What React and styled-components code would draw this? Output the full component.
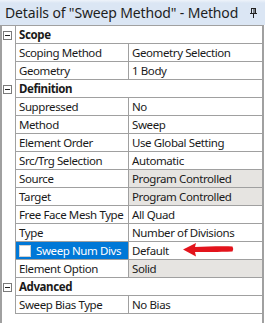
import React from "react";
import styled, {createGlobalStyle} from "styled-components";

const Global = createGlobalStyle`
    html, body {
        margin: 0;
        padding: 0;
        background: #f0f0f0;
    }
    body {
        font-family: "Noto Sans", "Open Sans", sans-serif;
        color: #1a1a1a;
    }
`;

const Panel = styled.div`
    position: relative;
    width: 265px;
    height: 323px;
    display: flex;
    flex-direction: column;
    background: #ffffff;
    overflow: hidden;
`;

const TitleBar = styled.div`
    height: 25px;
    display: flex;
    align-items: center;
    justify-content: space-between;
    padding: 0 8px 0 5px;
    background: linear-gradient(#eef3fa 0px, #dbe6f4 3px, #dbe6f4 100%);
    font-size: 14px;
    letter-spacing: -0.15px;
    color: #1e1e1e;
    white-space: nowrap;
`;

const Grid = styled.div`
    flex: 1;
    border-top: 1px solid #a0a0a0;
    border-left: 2px solid #a0a0a0;
    border-right: 2px solid #a0a0a0;
    margin-right: 1px;
    background: #ffffff;
`;

const Row = styled.div`
    display: grid;
    grid-template-columns: 13px 113px 1fr;
    height: 18px;
    font-size: 11.5px;
    letter-spacing: -0.4px;
`;

const Gutter = styled.div`
    display: flex;
    align-items: center;
    padding-left: 1px;
`;

const Cell = styled.div`
    display: flex;
    align-items: center;
    gap: 5px;
    border-left: 1px solid #a0a0a0;
    border-bottom: 1px solid #a0a0a0;
    padding-left: 3px;
    white-space: nowrap;
    overflow: hidden;
    background: ${p => (p.$selected ? "#0078d7" : p.$gray ? "#e6e4e1" : "#ffffff")};
    color: ${p => (p.$selected ? "#ffffff" : "#1a1a1a")};
    font-weight: ${p => (p.$bold ? 700 : 400)};
    grid-column: ${p => (p.$span ? "span 2" : "auto")};
`;

const Expander = styled.div`
    width: 7px;
    height: 7px;
    border: 1px solid #7a7a7a;
    background: #ffffff;
    display: flex;
    align-items: center;
    justify-content: center;
    &::after {
        content: "";
        width: 5px;
        height: 1px;
        background: #222;
    }
`;

const Check = styled.span`
    width: 10px;
    height: 10px;
    background: #ffffff;
    border: 1px solid #d0d0d0;
    flex: none;
`;

const Arrow = styled.svg`
    position: absolute;
    left: 182px;
    top: 242px;
`;

const Pin = () => (
    <svg width="7" height="10" viewBox="0 0 7 10">
        <rect x="1.5" y="0.5" width="4" height="5" fill="none" stroke="#222" />
        <rect x="3.5" y="1" width="1" height="4" fill="#222" />
        <rect x="0" y="5" width="7" height="1" fill="#222" />
        <rect x="3" y="6" width="1" height="4" fill="#222" />
    </svg>
);

const sections = [
    {
        title: "Scope",
        rows: [
            ["Scoping Method", "Geometry Selection"],
            ["Geometry", "1 Body"],
        ],
    },
    {
        title: "Definition",
        rows: [
            ["Suppressed", "No"],
            ["Method", "Sweep"],
            ["Element Order", "Use Global Setting"],
            ["Src/Trg Selection", "Automatic"],
            ["Source", "Program Controlled", "gray"],
            ["Target", "Program Controlled", "gray"],
            ["Free Face Mesh Type", "All Quad"],
            ["Type", "Number of Divisions"],
            ["Sweep Num Divs", "Default", "selected"],
            ["Element Option", "Solid", "gray"],
        ],
    },
    {
        title: "Advanced",
        rows: [["Sweep Bias Type", "No Bias"]],
    },
];

export default function App() {
    return (
        <Panel>
            <Global />
            <TitleBar>
                <span>Details of "Sweep Method" - Method</span>
                <Pin />
            </TitleBar>
            <Grid>
                {sections.map(section => (
                    <React.Fragment key={section.title}>
                        <Row>
                            <Gutter>
                                <Expander />
                            </Gutter>
                            <Cell $bold $span>
                                {section.title}
                            </Cell>
                        </Row>
                        {section.rows.map(([name, value, kind]) => (
                            <Row key={name}>
                                <Gutter />
                                <Cell $selected={kind === "selected"}>
                                    {kind === "selected" && <Check />}
                                    {name}
                                </Cell>
                                <Cell $gray={kind === "gray"}>{value}</Cell>
                            </Row>
                        ))}
                    </React.Fragment>
                ))}
            </Grid>
            <Arrow width="52" height="16" viewBox="0 0 52 16">
                <path
                    d="M1 7.5 L14 1 L13 5 C23 5 36 4 50.5 4.5 Q52 7 50.5 9.5 C36 10 23 10 13 10 L14 14.5 Z"
                    fill="#e3141c"
                />
            </Arrow>
        </Panel>
    );
}
